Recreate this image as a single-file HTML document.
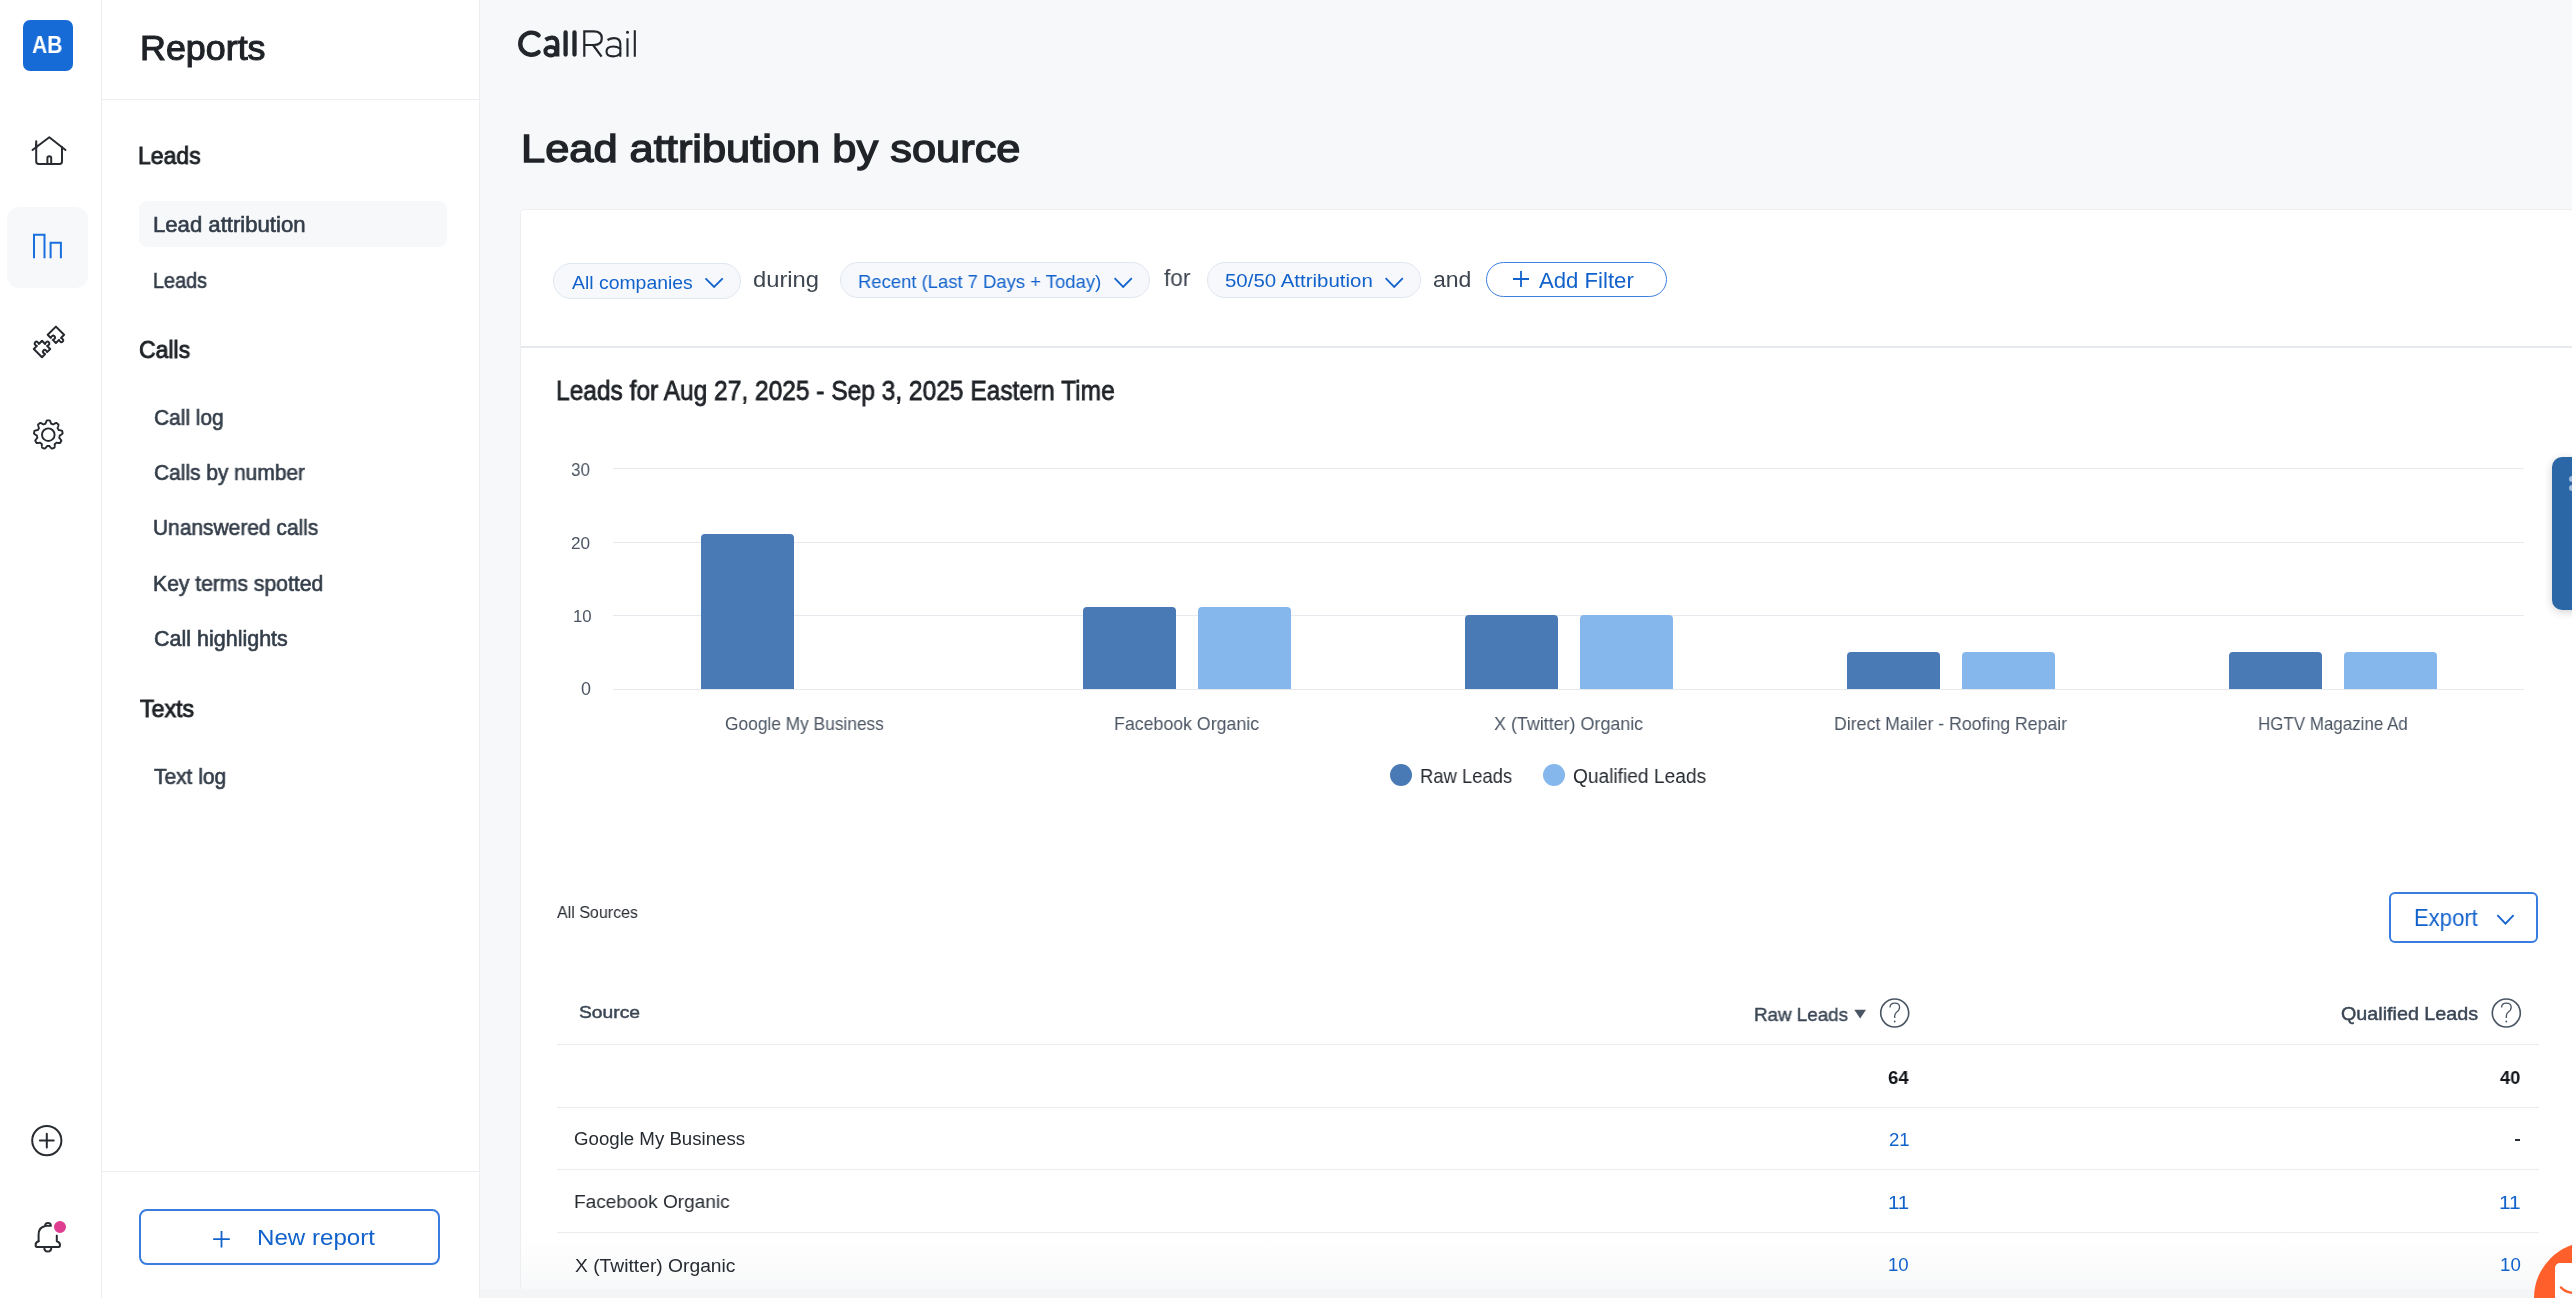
<!DOCTYPE html>
<html><head><meta charset="utf-8">
<style>
html,body{margin:0;padding:0;}
body{width:2572px;height:1298px;overflow:hidden;position:relative;background:#f7f8fa;font-family:"Liberation Sans",sans-serif;}
.a{position:absolute;}
.t{position:absolute;white-space:nowrap;font-family:"Liberation Sans",sans-serif;will-change:transform;}
svg{position:absolute;overflow:visible;}
</style></head><body>
<!-- left rail -->
<div class="a" style="left:0;top:0;width:101px;height:1298px;background:#fff;"></div>
<div class="a" style="left:101px;top:0;width:1px;height:1298px;background:#eceef2;"></div>
<div class="a" style="left:23px;top:20px;width:50px;height:51px;border-radius:7px;background:#166bd6;"></div>
<!-- nav active bg -->
<div class="a" style="left:7px;top:207px;width:81px;height:81px;border-radius:13px;background:#f6f8fa;"></div>
<!-- panel -->
<div class="a" style="left:102px;top:0;width:377px;height:1298px;background:#fff;"></div>
<div class="a" style="left:479px;top:0;width:1px;height:1298px;background:#eceef2;"></div>
<div class="a" style="left:102px;top:99px;width:377px;height:1px;background:#eceef2;"></div>
<div class="a" style="left:139px;top:201px;width:308px;height:46px;border-radius:8px;background:#f6f8fa;"></div>
<div class="a" style="left:102px;top:1171px;width:377px;height:1px;background:#eceef2;"></div>
<div class="a" style="left:139px;top:1209px;width:301px;height:56px;box-sizing:border-box;border:2px solid #3a7de0;border-radius:8px;"></div>

<!-- icons rail -->
<svg style="left:0;top:0" width="101" height="1298" viewBox="0 0 101 1298" fill="none" stroke="#282c31" stroke-width="2" stroke-linecap="round" stroke-linejoin="round">
  <!-- home -->
  <path d="M32.5 150 L49.3 137.3 L65.5 150"/>
  <path d="M36.2 144 V161.5 Q36.2 163.9 38.6 163.9 H59.6 Q62 163.9 62 161.5 V147"/>
  <path d="M36.2 141.2 V148"/>
  <path d="M47.4 163.9 V158 Q47.4 156.2 49.3 156.2 Q51.2 156.2 51.2 158 V163.9"/>
  <!-- reports -->
  <path d="M34 258.2 V234.7 H44.5 V258.2 M50.6 258.2 V242.8 H60.9 V258.2" stroke="#1a6fde" stroke-linecap="butt" stroke-linejoin="miter"/>
  <!-- gear -->
  <path d="M48.30 420.35 L48.47 420.35 L48.63 420.35 L48.80 420.36 L48.97 420.37 L49.13 420.37 L49.30 420.38 L49.47 420.40 L49.63 420.41 L49.78 420.61 L49.92 420.82 L50.06 421.05 L50.19 421.29 L50.31 421.53 L50.42 421.79 L50.53 422.05 L50.63 422.30 L50.73 422.56 L50.83 422.81 L50.92 423.06 L51.00 423.29 L51.09 423.51 L51.17 423.72 L51.30 423.75 L51.43 423.79 L51.56 423.83 L51.68 423.87 L51.81 423.91 L51.93 423.95 L52.06 423.99 L52.18 424.03 L52.31 424.08 L52.43 424.13 L52.55 424.18 L52.67 424.23 L52.80 424.28 L52.92 424.33 L53.04 424.39 L53.16 424.44 L53.35 424.34 L53.56 424.22 L53.78 424.10 L54.01 423.97 L54.24 423.84 L54.48 423.70 L54.72 423.57 L54.97 423.44 L55.23 423.32 L55.48 423.21 L55.73 423.11 L55.98 423.02 L56.23 422.95 L56.46 422.90 L56.60 422.99 L56.73 423.09 L56.87 423.19 L57.00 423.29 L57.13 423.39 L57.27 423.50 L57.40 423.60 L57.52 423.71 L57.65 423.82 L57.78 423.92 L57.90 424.04 L58.03 424.15 L58.15 424.26 L58.27 424.38 L58.39 424.49 L58.51 424.61 L58.49 424.85 L58.47 425.11 L58.42 425.37 L58.37 425.64 L58.30 425.90 L58.23 426.17 L58.14 426.44 L58.06 426.70 L57.97 426.96 L57.88 427.22 L57.79 427.46 L57.70 427.70 L57.63 427.92 L57.56 428.14 L57.64 428.24 L57.71 428.35 L57.78 428.46 L57.85 428.57 L57.93 428.69 L57.99 428.80 L58.06 428.91 L58.13 429.02 L58.19 429.14 L58.26 429.26 L58.32 429.37 L58.38 429.49 L58.44 429.61 L58.50 429.72 L58.56 429.84 L58.61 429.96 L58.83 430.01 L59.07 430.06 L59.31 430.10 L59.57 430.15 L59.83 430.20 L60.10 430.25 L60.38 430.31 L60.65 430.37 L60.92 430.44 L61.18 430.51 L61.44 430.60 L61.69 430.69 L61.92 430.79 L62.14 430.91 L62.18 431.07 L62.22 431.23 L62.26 431.39 L62.30 431.55 L62.34 431.72 L62.37 431.88 L62.40 432.04 L62.43 432.21 L62.46 432.37 L62.49 432.54 L62.51 432.70 L62.53 432.87 L62.55 433.03 L62.57 433.20 L62.59 433.37 L62.60 433.53 L62.44 433.71 L62.25 433.89 L62.05 434.06 L61.84 434.23 L61.61 434.39 L61.38 434.55 L61.15 434.70 L60.91 434.85 L60.68 434.99 L60.45 435.12 L60.22 435.26 L60.01 435.38 L59.80 435.50 L59.61 435.62 L59.60 435.75 L59.59 435.89 L59.57 436.02 L59.56 436.15 L59.54 436.28 L59.52 436.41 L59.50 436.54 L59.48 436.67 L59.45 436.80 L59.43 436.93 L59.40 437.06 L59.37 437.19 L59.34 437.32 L59.31 437.45 L59.28 437.57 L59.25 437.70 L59.38 437.88 L59.53 438.06 L59.69 438.26 L59.86 438.46 L60.03 438.66 L60.20 438.88 L60.38 439.09 L60.54 439.32 L60.71 439.54 L60.86 439.77 L61.00 440.00 L61.13 440.24 L61.25 440.46 L61.34 440.69 L61.27 440.84 L61.20 440.99 L61.12 441.14 L61.05 441.29 L60.97 441.44 L60.89 441.58 L60.81 441.73 L60.73 441.88 L60.64 442.02 L60.56 442.16 L60.47 442.30 L60.38 442.45 L60.29 442.59 L60.20 442.72 L60.10 442.86 L60.01 443.00 L59.77 443.03 L59.51 443.05 L59.24 443.05 L58.97 443.04 L58.70 443.02 L58.42 442.99 L58.14 442.96 L57.87 442.92 L57.60 442.88 L57.33 442.83 L57.08 442.79 L56.83 442.75 L56.59 442.71 L56.37 442.68 L56.28 442.77 L56.18 442.86 L56.09 442.96 L55.99 443.05 L55.89 443.13 L55.80 443.22 L55.70 443.31 L55.60 443.39 L55.49 443.48 L55.39 443.56 L55.29 443.64 L55.18 443.72 L55.08 443.80 L54.97 443.88 L54.86 443.96 L54.76 444.04 L54.75 444.26 L54.74 444.50 L54.74 444.75 L54.74 445.01 L54.74 445.28 L54.73 445.55 L54.72 445.83 L54.71 446.11 L54.69 446.39 L54.66 446.66 L54.62 446.93 L54.57 447.19 L54.51 447.44 L54.44 447.67 L54.29 447.74 L54.14 447.81 L53.98 447.88 L53.83 447.94 L53.68 448.01 L53.52 448.07 L53.36 448.13 L53.21 448.18 L53.05 448.24 L52.89 448.30 L52.73 448.35 L52.58 448.40 L52.42 448.45 L52.26 448.49 L52.09 448.54 L51.93 448.58 L51.73 448.45 L51.52 448.30 L51.32 448.13 L51.12 447.95 L50.92 447.76 L50.72 447.56 L50.53 447.35 L50.35 447.15 L50.17 446.94 L49.99 446.74 L49.82 446.54 L49.66 446.35 L49.50 446.16 L49.35 446.00 L49.22 446.01 L49.09 446.02 L48.96 446.03 L48.83 446.04 L48.70 446.04 L48.56 446.05 L48.43 446.05 L48.30 446.05 L48.17 446.05 L48.04 446.05 L47.90 446.04 L47.77 446.04 L47.64 446.03 L47.51 446.02 L47.38 446.01 L47.25 446.00 L47.10 446.16 L46.94 446.35 L46.78 446.54 L46.61 446.74 L46.43 446.94 L46.25 447.15 L46.07 447.35 L45.88 447.56 L45.68 447.76 L45.48 447.95 L45.28 448.13 L45.08 448.30 L44.87 448.45 L44.67 448.58 L44.51 448.54 L44.34 448.49 L44.18 448.45 L44.02 448.40 L43.87 448.35 L43.71 448.30 L43.55 448.24 L43.39 448.18 L43.24 448.13 L43.08 448.07 L42.92 448.01 L42.77 447.94 L42.62 447.88 L42.46 447.81 L42.31 447.74 L42.16 447.67 L42.09 447.44 L42.03 447.19 L41.98 446.93 L41.94 446.66 L41.91 446.39 L41.89 446.11 L41.87 445.83 L41.87 445.55 L41.86 445.28 L41.86 445.01 L41.86 444.75 L41.86 444.50 L41.85 444.26 L41.84 444.04 L41.74 443.96 L41.63 443.88 L41.52 443.80 L41.42 443.72 L41.31 443.64 L41.21 443.56 L41.11 443.48 L41.00 443.39 L40.90 443.31 L40.80 443.22 L40.71 443.13 L40.61 443.05 L40.51 442.96 L40.42 442.86 L40.32 442.77 L40.23 442.68 L40.01 442.71 L39.77 442.75 L39.52 442.79 L39.27 442.83 L39.00 442.88 L38.73 442.92 L38.46 442.96 L38.18 442.99 L37.90 443.02 L37.63 443.04 L37.36 443.05 L37.09 443.05 L36.83 443.03 L36.59 443.00 L36.50 442.86 L36.40 442.72 L36.31 442.59 L36.22 442.45 L36.13 442.30 L36.04 442.16 L35.96 442.02 L35.87 441.88 L35.79 441.73 L35.71 441.58 L35.63 441.44 L35.55 441.29 L35.48 441.14 L35.40 440.99 L35.33 440.84 L35.26 440.69 L35.35 440.46 L35.47 440.24 L35.60 440.00 L35.74 439.77 L35.89 439.54 L36.06 439.32 L36.22 439.09 L36.40 438.88 L36.57 438.66 L36.74 438.46 L36.91 438.26 L37.07 438.06 L37.22 437.88 L37.35 437.70 L37.32 437.57 L37.29 437.45 L37.26 437.32 L37.23 437.19 L37.20 437.06 L37.17 436.93 L37.15 436.80 L37.12 436.67 L37.10 436.54 L37.08 436.41 L37.06 436.28 L37.04 436.15 L37.03 436.02 L37.01 435.89 L37.00 435.75 L36.99 435.62 L36.80 435.50 L36.59 435.38 L36.38 435.26 L36.15 435.12 L35.92 434.99 L35.69 434.85 L35.45 434.70 L35.22 434.55 L34.99 434.39 L34.76 434.23 L34.55 434.06 L34.35 433.89 L34.16 433.71 L34.00 433.53 L34.01 433.37 L34.03 433.20 L34.05 433.03 L34.07 432.87 L34.09 432.70 L34.11 432.54 L34.14 432.37 L34.17 432.21 L34.20 432.04 L34.23 431.88 L34.26 431.72 L34.30 431.55 L34.34 431.39 L34.38 431.23 L34.42 431.07 L34.46 430.91 L34.68 430.79 L34.91 430.69 L35.16 430.60 L35.42 430.51 L35.68 430.44 L35.95 430.37 L36.22 430.31 L36.50 430.25 L36.77 430.20 L37.03 430.15 L37.29 430.10 L37.53 430.06 L37.77 430.01 L37.99 429.96 L38.04 429.84 L38.10 429.72 L38.16 429.61 L38.22 429.49 L38.28 429.37 L38.34 429.26 L38.41 429.14 L38.47 429.02 L38.54 428.91 L38.61 428.80 L38.67 428.69 L38.75 428.57 L38.82 428.46 L38.89 428.35 L38.96 428.24 L39.04 428.14 L38.97 427.92 L38.90 427.70 L38.81 427.46 L38.72 427.22 L38.63 426.96 L38.54 426.70 L38.46 426.44 L38.37 426.17 L38.30 425.90 L38.23 425.64 L38.18 425.37 L38.13 425.11 L38.11 424.85 L38.09 424.61 L38.21 424.49 L38.33 424.38 L38.45 424.26 L38.57 424.15 L38.70 424.04 L38.82 423.92 L38.95 423.82 L39.08 423.71 L39.20 423.60 L39.33 423.50 L39.47 423.39 L39.60 423.29 L39.73 423.19 L39.87 423.09 L40.00 422.99 L40.14 422.90 L40.37 422.95 L40.62 423.02 L40.87 423.11 L41.12 423.21 L41.37 423.32 L41.63 423.44 L41.88 423.57 L42.12 423.70 L42.36 423.84 L42.59 423.97 L42.82 424.10 L43.04 424.22 L43.25 424.34 L43.44 424.44 L43.56 424.39 L43.68 424.33 L43.80 424.28 L43.93 424.23 L44.05 424.18 L44.17 424.13 L44.29 424.08 L44.42 424.03 L44.54 423.99 L44.67 423.95 L44.79 423.91 L44.92 423.87 L45.04 423.83 L45.17 423.79 L45.30 423.75 L45.43 423.72 L45.51 423.51 L45.60 423.29 L45.68 423.06 L45.77 422.81 L45.87 422.56 L45.97 422.30 L46.07 422.05 L46.18 421.79 L46.29 421.53 L46.41 421.29 L46.54 421.05 L46.68 420.82 L46.82 420.61 L46.97 420.41 L47.13 420.40 L47.30 420.38 L47.47 420.37 L47.63 420.37 L47.80 420.36 L47.97 420.35 L48.13 420.35 L48.30 420.35Z" stroke="#25292e" stroke-width="1.9" fill="none" stroke-linejoin="round"/><circle cx="48.3" cy="434.7" r="6.3" stroke="#25292e" stroke-width="1.9" fill="none"/><path d="M55.90 326.60 L64.10 334.80 L60.98 337.92 C63.55 339.17 63.80 340.40 62.65 341.55 C61.50 342.70 60.27 342.45 59.02 339.88 L55.90 343.00 L52.78 339.88 C55.35 338.63 55.60 337.40 54.45 336.25 C53.30 335.10 52.07 335.35 50.82 337.92 L47.70 334.80 L55.90 326.60Z" stroke="#25292e" stroke-width="2.0" fill="none" stroke-linejoin="round"/><path d="M42.00 340.80 L45.12 343.92 C46.37 341.35 47.60 341.10 48.75 342.25 C49.90 343.40 49.65 344.63 47.08 345.88 L50.20 349.00 L47.08 352.12 C45.83 349.55 44.60 349.30 43.45 350.45 C42.30 351.60 42.55 352.83 45.12 354.08 L42.00 357.20 L33.80 349.00 L36.92 345.88 C34.35 344.63 34.10 343.40 35.25 342.25 C36.40 341.10 37.63 341.35 38.88 343.92 L42.00 340.80Z" stroke="#25292e" stroke-width="2.0" fill="none" stroke-linejoin="round"/>
  <!-- plus circle -->
  <circle cx="46.8" cy="1140.6" r="14.6"/>
  <path d="M46.8 1133.7 V1147.5 M39.9 1140.6 H53.7"/>
  <!-- bell -->
  <path d="M38.6 1241.3 V1234.5 Q38.6 1227.2 45.3 1225.9"/>
  <path d="M45.1 1225.9 A2.9 2.9 0 0 1 50.9 1225.9 Z" stroke-width="1.9"/>
  <path d="M56.8 1235.4 V1241.3 Q60 1242.3 60 1244.9 Q60 1247.1 57.6 1247.1 H38 Q35.6 1247.1 35.6 1244.9 Q35.6 1242.3 38.6 1241.3"/>
  <path d="M44.3 1247.4 Q44.3 1251.5 47.8 1251.5 Q51.3 1251.5 51.3 1247.4"/>
</svg>
<div class="a" style="left:51.9px;top:1218.8px;width:12px;height:12px;border-radius:50%;background:#de3d90;border:2px solid #fff;"></div>

<!-- main logo -->
<svg style="left:0;top:0" width="700" height="80" viewBox="0 0 700 80" fill="none" stroke="#23272c" stroke-linecap="round">
  <path d="M538.6 35.3 A11.1 11.1 0 1 0 538.6 52.1" stroke-width="4.4"/>
  <path d="M545.5 39.8 Q549 37.5 552 37.6 Q557.3 37.8 557.3 43.5 V56.5" stroke-width="4.2" stroke-linecap="butt"/>
  <ellipse cx="550.8" cy="51.2" rx="5.4" ry="4.3" stroke-width="4"/>
  <path d="M565.6 32.4 V54.5 M574.5 32.4 V54.5" stroke-width="4.3"/>
  <path d="M584.3 56.7 V31.4 H593.5 Q601.8 31.4 601.8 38.2 Q601.8 45 593.5 45 H584.5 M593 45 L601.6 56.7" stroke-width="2.2" stroke-linecap="butt"/>
  <path d="M607.5 40 Q610.5 38.1 614 38.1 Q620.3 38.1 620.3 44 V56.7" stroke-width="2.1" stroke-linecap="butt"/>
  <path d="M620.3 48.6 Q617 46.5 613.3 46.5 Q606.5 46.5 606.5 51.5 Q606.5 56.4 613.2 56.4 Q618 56.4 620.3 53" stroke-width="2.1"/>
  <path d="M627.5 38.2 V56.7 M634.8 30.2 V56.7" stroke-width="2.1" stroke-linecap="butt"/>
  <circle cx="627.5" cy="32.2" r="1.5" fill="#23272c" stroke="none"/>
</svg>

<!-- card -->
<div class="a" style="left:520px;top:209px;width:2120px;height:1080px;box-sizing:border-box;background:#fff;border:1px solid #eceef2;border-bottom:none;border-radius:5px 5px 0 0;"></div>
<div class="a" style="left:521px;top:346px;width:2051px;height:1.5px;background:#e6e9ee;"></div>

<!-- pills -->
<div class="a" style="left:553px;top:262.5px;width:188px;height:36px;box-sizing:border-box;border:1.2px solid #dfe7f1;background:#f6f8fb;border-radius:18px;"></div>
<div class="a" style="left:840px;top:262px;width:309.5px;height:35.5px;box-sizing:border-box;border:1.2px solid #dfe7f1;background:#f6f8fb;border-radius:18px;"></div>
<div class="a" style="left:1207px;top:262px;width:213.5px;height:35.5px;box-sizing:border-box;border:1.2px solid #dfe7f1;background:#f6f8fb;border-radius:18px;"></div>
<div class="a" style="left:1486px;top:261.6px;width:180.6px;height:35px;box-sizing:border-box;border:1.8px solid #3d80e0;border-radius:18px;"></div>
<svg style="left:0;top:0" width="2572" height="1298" viewBox="0 0 2572 1298" fill="none" stroke="#1262cc" stroke-width="1.8" stroke-linecap="butt" stroke-linejoin="miter">
  <path d="M705.5 278.3 L714.1 287 L722.7 278.3"/>
  <path d="M1114.6 278.2 L1123.2 286.9 L1131.8 278.2"/>
  <path d="M1385.6 278.2 L1394.2 286.9 L1402.8 278.2"/>
  <path d="M1521 271 V286.9 M1513 279 H1529"/>
  <path d="M2497.4 915.2 L2505.5 923.6 L2513.6 915.2"/>
  <path d="M221.5 1231 V1247.5 M213.2 1239.2 H229.8"/>
</svg>

<!-- chart -->
<div class="a" style="left:613px;top:468px;width:1910.5px;height:1.2px;background:#e6e9ee;"></div>
<div class="a" style="left:613px;top:541.6px;width:1910.5px;height:1.2px;background:#e6e9ee;"></div>
<div class="a" style="left:613px;top:615.1px;width:1910.5px;height:1.2px;background:#e6e9ee;"></div>
<div class="a" style="left:613px;top:688.9px;width:1910.5px;height:1.2px;background:#e6e9ee;"></div>
<div class="a" style="left:700.5px;top:533.8px;width:93px;height:155.5px;background:#4a7ab5;border-radius:4px 4px 0 0;"></div>
<div class="a" style="left:1082.7px;top:607.4px;width:93px;height:81.9px;background:#4a7ab5;border-radius:4px 4px 0 0;"></div>
<div class="a" style="left:1197.7px;top:607.4px;width:93px;height:81.9px;background:#85b7ec;border-radius:4px 4px 0 0;"></div>
<div class="a" style="left:1464.8px;top:614.8px;width:93px;height:74.5px;background:#4a7ab5;border-radius:4px 4px 0 0;"></div>
<div class="a" style="left:1579.8px;top:614.8px;width:93px;height:74.5px;background:#85b7ec;border-radius:4px 4px 0 0;"></div>
<div class="a" style="left:1846.9px;top:651.6px;width:93px;height:37.7px;background:#4a7ab5;border-radius:4px 4px 0 0;"></div>
<div class="a" style="left:1961.9px;top:651.6px;width:93px;height:37.7px;background:#85b7ec;border-radius:4px 4px 0 0;"></div>
<div class="a" style="left:2228.9px;top:651.6px;width:93px;height:37.7px;background:#4a7ab5;border-radius:4px 4px 0 0;"></div>
<div class="a" style="left:2343.9px;top:651.6px;width:93px;height:37.7px;background:#85b7ec;border-radius:4px 4px 0 0;"></div>

<!-- legend dots -->
<div class="a" style="left:1389.9px;top:764px;width:22.2px;height:22.2px;border-radius:50%;background:#4a7ab5;"></div>
<div class="a" style="left:1542.9px;top:764px;width:22.2px;height:22.2px;border-radius:50%;background:#85b7ec;"></div>

<!-- export -->
<div class="a" style="left:2389.3px;top:891.8px;width:149.2px;height:50.8px;box-sizing:border-box;border:2px solid #3a7de0;border-radius:6px;"></div>

<!-- table lines -->
<div class="a" style="left:557px;top:1044px;width:1981.5px;height:1.3px;background:#e9ecf0;"></div>
<div class="a" style="left:557px;top:1106.8px;width:1981.5px;height:1.5px;background:#eaecf0;"></div>
<div class="a" style="left:557px;top:1168.9px;width:1981.5px;height:1.5px;background:#eaecf0;"></div>
<div class="a" style="left:557px;top:1231.6px;width:1981.5px;height:1.5px;background:#eaecf0;"></div>
<svg style="left:0;top:0" width="2572" height="1298" viewBox="0 0 2572 1298" fill="none" stroke="#4a5563" stroke-width="1.6">
  <path d="M1854.3 1009.8 H1866 L1860.15 1018.5 Z" fill="#4a5563" stroke="none"/>
  <circle cx="1894.7" cy="1013" r="14"/>
  <circle cx="2506.3" cy="1013" r="14"/>
  <path d="M1890 1007.5 Q1890 1003.2 1894.8 1003.2 Q1899.6 1003.2 1899.6 1007.3 Q1899.6 1010.2 1896.5 1012.2 Q1894.7 1013.5 1894.7 1016.5 V1018" stroke-width="1.3"/>
  <circle cx="1894.7" cy="1021.5" r="0.9" fill="#4a5563" stroke="none"/>
  <path d="M2501.6 1007.5 Q2501.6 1003.2 2506.4 1003.2 Q2511.2 1003.2 2511.2 1007.3 Q2511.2 1010.2 2508.1 1012.2 Q2506.3 1013.5 2506.3 1016.5 V1018" stroke-width="1.3"/>
  <circle cx="2506.3" cy="1021.5" r="0.9" fill="#4a5563" stroke="none"/>
</svg>
<div class="a" style="left:2514.8px;top:1139px;width:5.6px;height:1.8px;background:#2a2f35;"></div>

<!-- bottom fade -->
<div class="a" style="left:521px;top:1234px;width:2051px;height:55px;background:linear-gradient(to bottom, rgba(255,255,255,0), rgba(243,244,246,0.6));"></div>
<div class="a" style="left:480px;top:1289px;width:2092px;height:9px;background:#f4f5f7;"></div>

<div class="t" style="left:31.64px;top:34.18px;font-size:23.66px;line-height:23.66px;color:#ffffff;font-weight:700;transform:scaleX(0.8923);transform-origin:0 0;">AB</div>
<div class="t" style="left:140.00px;top:30.78px;font-size:34.92px;line-height:34.92px;color:#1f2328;font-weight:400;transform:scaleX(1.0269);transform-origin:0 0;-webkit-text-stroke:1.1px #1f2328;">Reports</div>
<div class="t" style="left:138.42px;top:144.38px;font-size:24.03px;line-height:24.03px;color:#1d2125;font-weight:400;transform:scaleX(0.9569);transform-origin:0 0;-webkit-text-stroke:0.9px #1d2125;">Leads</div>
<div class="t" style="left:139.27px;top:338.35px;font-size:24.18px;line-height:24.18px;color:#1d2125;font-weight:400;transform:scaleX(0.9505);transform-origin:0 0;-webkit-text-stroke:0.9px #1d2125;">Calls</div>
<div class="t" style="left:139.86px;top:697.79px;font-size:23.59px;line-height:23.59px;color:#1d2125;font-weight:400;transform:scaleX(0.9826);transform-origin:0 0;-webkit-text-stroke:0.9px #1d2125;">Texts</div>
<div class="t" style="left:152.85px;top:215.05px;font-size:21.28px;line-height:21.28px;color:#333d49;font-weight:400;transform:scaleX(1.0401);transform-origin:0 0;-webkit-text-stroke:0.6px #333d49;">Lead attribution</div>
<div class="t" style="left:153.03px;top:270.87px;font-size:21.28px;line-height:21.28px;color:#333d49;font-weight:400;transform:scaleX(0.9327);transform-origin:0 0;-webkit-text-stroke:0.6px #333d49;">Leads</div>
<div class="t" style="left:153.65px;top:408.37px;font-size:21.28px;line-height:21.28px;color:#333d49;font-weight:400;transform:scaleX(0.9825);transform-origin:0 0;-webkit-text-stroke:0.6px #333d49;">Call log</div>
<div class="t" style="left:153.65px;top:463.05px;font-size:21.28px;line-height:21.28px;color:#333d49;font-weight:400;transform:scaleX(0.9827);transform-origin:0 0;-webkit-text-stroke:0.6px #333d49;">Calls by number</div>
<div class="t" style="left:153.27px;top:518.11px;font-size:21.28px;line-height:21.28px;color:#333d49;font-weight:400;transform:scaleX(0.9847);transform-origin:0 0;-webkit-text-stroke:0.6px #333d49;">Unanswered calls</div>
<div class="t" style="left:152.93px;top:574.49px;font-size:21.28px;line-height:21.28px;color:#333d49;font-weight:400;transform:scaleX(0.9934);transform-origin:0 0;-webkit-text-stroke:0.6px #333d49;">Key terms spotted</div>
<div class="t" style="left:153.58px;top:629.05px;font-size:21.28px;line-height:21.28px;color:#333d49;font-weight:400;transform:scaleX(1.0110);transform-origin:0 0;-webkit-text-stroke:0.6px #333d49;">Call highlights</div>
<div class="t" style="left:154.25px;top:767.37px;font-size:21.28px;line-height:21.28px;color:#333d49;font-weight:400;transform:scaleX(0.9839);transform-origin:0 0;-webkit-text-stroke:0.6px #333d49;">Text log</div>
<div class="t" style="left:257.27px;top:1226.48px;font-size:22.92px;line-height:22.92px;color:#1262cc;font-weight:400;transform:scaleX(1.0528);transform-origin:0 0;">New report</div>
<div class="t" style="left:520.60px;top:129.52px;font-size:38.33px;line-height:38.33px;color:#202428;font-weight:400;transform:scaleX(1.1325);transform-origin:0 0;-webkit-text-stroke:1.3px #202428;">Lead attribution by source</div>
<div class="t" style="left:572.14px;top:272.74px;font-size:19.15px;line-height:19.15px;color:#1262cc;font-weight:400;transform:scaleX(1.0137);transform-origin:0 0;">All companies</div>
<div class="t" style="left:753.18px;top:269.03px;font-size:22.42px;line-height:22.42px;color:#3d4650;font-weight:400;transform:scaleX(1.0605);transform-origin:0 0;">during</div>
<div class="t" style="left:857.91px;top:271.86px;font-size:19.15px;line-height:19.15px;color:#1262cc;font-weight:400;transform:scaleX(0.9637);transform-origin:0 0;">Recent (Last 7 Days + Today)</div>
<div class="t" style="left:1163.64px;top:267.09px;font-size:23.64px;line-height:23.64px;color:#3d4650;font-weight:400;transform:scaleX(0.9566);transform-origin:0 0;">for</div>
<div class="t" style="left:1225.28px;top:272.31px;font-size:18.63px;line-height:18.63px;color:#1262cc;font-weight:400;transform:scaleX(1.0987);transform-origin:0 0;">50/50 Attribution</div>
<div class="t" style="left:1432.70px;top:268.73px;font-size:22.20px;line-height:22.20px;color:#3d4650;font-weight:400;transform:scaleX(1.0383);transform-origin:0 0;">and</div>
<div class="t" style="left:1539.42px;top:270.06px;font-size:22.16px;line-height:22.16px;color:#1262cc;font-weight:400;transform:scaleX(0.9989);transform-origin:0 0;">Add Filter</div>
<div class="t" style="left:555.62px;top:377.54px;font-size:26.80px;line-height:26.80px;color:#1f2328;font-weight:400;transform:scaleX(0.9147);transform-origin:0 0;-webkit-text-stroke:0.8px #1f2328;">Leads for Aug 27, 2025 - Sep 3, 2025 Eastern Time</div>
<div class="t" style="left:571.13px;top:460.27px;font-size:19.04px;line-height:19.04px;color:#4b5563;font-weight:400;transform:scaleX(0.9028);transform-origin:0 0;">30</div>
<div class="t" style="left:571.15px;top:535.66px;font-size:16.77px;line-height:16.77px;color:#4b5563;font-weight:400;transform:scaleX(1.0232);transform-origin:0 0;">20</div>
<div class="t" style="left:572.54px;top:609.22px;font-size:16.77px;line-height:16.77px;color:#4b5563;font-weight:400;transform:scaleX(0.9926);transform-origin:0 0;">10</div>
<div class="t" style="left:581.18px;top:681.23px;font-size:17.90px;line-height:17.90px;color:#4b5563;font-weight:400;">0</div>
<div class="t" style="left:724.56px;top:715.72px;font-size:17.43px;line-height:17.43px;color:#4b5563;font-weight:400;transform:scaleX(0.9945);transform-origin:0 0;">Google My Business</div>
<div class="t" style="left:1493.87px;top:714.39px;font-size:19.04px;line-height:19.04px;color:#4b5563;font-weight:400;transform:scaleX(0.9402);transform-origin:0 0;">X (Twitter) Organic</div>
<div class="t" style="left:1833.56px;top:714.39px;font-size:19.04px;line-height:19.04px;color:#4b5563;font-weight:400;transform:scaleX(0.9300);transform-origin:0 0;">Direct Mailer - Roofing Repair</div>
<div class="t" style="left:1113.56px;top:714.39px;font-size:19.04px;line-height:19.04px;color:#4b5563;font-weight:400;transform:scaleX(0.9329);transform-origin:0 0;">Facebook Organic</div>
<div class="t" style="left:2257.68px;top:714.39px;font-size:19.04px;line-height:19.04px;color:#4b5563;font-weight:400;transform:scaleX(0.8906);transform-origin:0 0;">HGTV Magazine Ad</div>
<div class="t" style="left:1420.35px;top:767.04px;font-size:19.80px;line-height:19.80px;color:#262b31;font-weight:400;transform:scaleX(0.9318);transform-origin:0 0;">Raw Leads</div>
<div class="t" style="left:1573.22px;top:767.43px;font-size:19.34px;line-height:19.34px;color:#262b31;font-weight:400;transform:scaleX(0.9903);transform-origin:0 0;">Qualified Leads</div>
<div class="t" style="left:556.64px;top:903.78px;font-size:17.19px;line-height:17.19px;color:#262b31;font-weight:400;transform:scaleX(0.9319);transform-origin:0 0;">All Sources</div>
<div class="t" style="left:2413.62px;top:906.75px;font-size:23.00px;line-height:23.00px;color:#1262cc;font-weight:400;transform:scaleX(0.9596);transform-origin:0 0;">Export</div>
<div class="t" style="left:578.59px;top:1004.26px;font-size:17.37px;line-height:17.37px;color:#3a4654;font-weight:400;transform:scaleX(1.1100);transform-origin:0 0;-webkit-text-stroke:0.45px #3a4654;">Source</div>
<div class="t" style="left:1754.11px;top:1005.24px;font-size:19.15px;line-height:19.15px;color:#3a4654;font-weight:400;transform:scaleX(0.9813);transform-origin:0 0;-webkit-text-stroke:0.45px #3a4654;">Raw Leads</div>
<div class="t" style="left:2341.23px;top:1004.17px;font-size:19.06px;line-height:19.06px;color:#3a4654;font-weight:400;transform:scaleX(1.0360);transform-origin:0 0;-webkit-text-stroke:0.45px #3a4654;">Qualified Leads</div>
<div class="t" style="left:1887.76px;top:1067.74px;font-size:19.15px;line-height:19.15px;color:#111418;font-weight:700;transform:scaleX(0.9671);transform-origin:0 0;">64</div>
<div class="t" style="left:2500.14px;top:1067.74px;font-size:19.15px;line-height:19.15px;color:#111418;font-weight:700;transform:scaleX(0.9514);transform-origin:0 0;">40</div>
<div class="t" style="left:574.37px;top:1130.14px;font-size:18.61px;line-height:18.61px;color:#262b31;font-weight:400;transform:scaleX(1.0028);transform-origin:0 0;">Google My Business</div>
<div class="t" style="left:573.55px;top:1192.35px;font-size:19.25px;line-height:19.25px;color:#262b31;font-weight:400;transform:scaleX(0.9891);transform-origin:0 0;">Facebook Organic</div>
<div class="t" style="left:574.58px;top:1256.29px;font-size:19.25px;line-height:19.25px;color:#262b31;font-weight:400;transform:scaleX(0.9989);transform-origin:0 0;">X (Twitter) Organic</div>
<div class="t" style="left:1888.52px;top:1130.58px;font-size:18.61px;line-height:18.61px;color:#1262cc;font-weight:400;transform:scaleX(0.9852);transform-origin:0 0;">21</div>
<div class="t" style="left:1887.51px;top:1192.89px;font-size:19.04px;line-height:19.04px;color:#1262cc;font-weight:400;transform:scaleX(1.0761);transform-origin:0 0;">11</div>
<div class="t" style="left:1887.99px;top:1256.46px;font-size:18.61px;line-height:18.61px;color:#1262cc;font-weight:400;transform:scaleX(0.9915);transform-origin:0 0;">10</div>
<div class="t" style="left:2499.29px;top:1192.89px;font-size:19.04px;line-height:19.04px;color:#1262cc;font-weight:400;transform:scaleX(1.0974);transform-origin:0 0;">11</div>
<div class="t" style="left:2499.83px;top:1256.46px;font-size:18.61px;line-height:18.61px;color:#1262cc;font-weight:400;transform:scaleX(1.0035);transform-origin:0 0;">10</div>

<!-- feedback tab -->
<div class="a" style="left:2551.5px;top:457px;width:40px;height:153px;border-radius:10px;background:#2b67a6;box-shadow:0 2px 8px rgba(0,0,0,0.18);"></div>
<div class="a" style="left:2569.4px;top:476.4px;width:6px;height:5.8px;border-radius:50%;background:#9fbadb;"></div>
<div class="a" style="left:2569.4px;top:485.4px;width:6px;height:5.8px;border-radius:50%;background:#9fbadb;"></div>

<!-- chat -->
<div class="a" style="left:2534px;top:1242px;width:112px;height:112px;border-radius:50%;background:#ff602b;"></div>
<div class="a" style="left:2555px;top:1263px;width:40px;height:40px;border-radius:5px;background:#fff;"></div>
<svg style="left:0;top:0" width="2572" height="1298" viewBox="0 0 2572 1298" fill="none">
  <path d="M2561 1287.5 Q2566 1293 2575 1293" stroke="#ff602b" stroke-width="2.5" stroke-linecap="round"/>
</svg>
</body></html>
